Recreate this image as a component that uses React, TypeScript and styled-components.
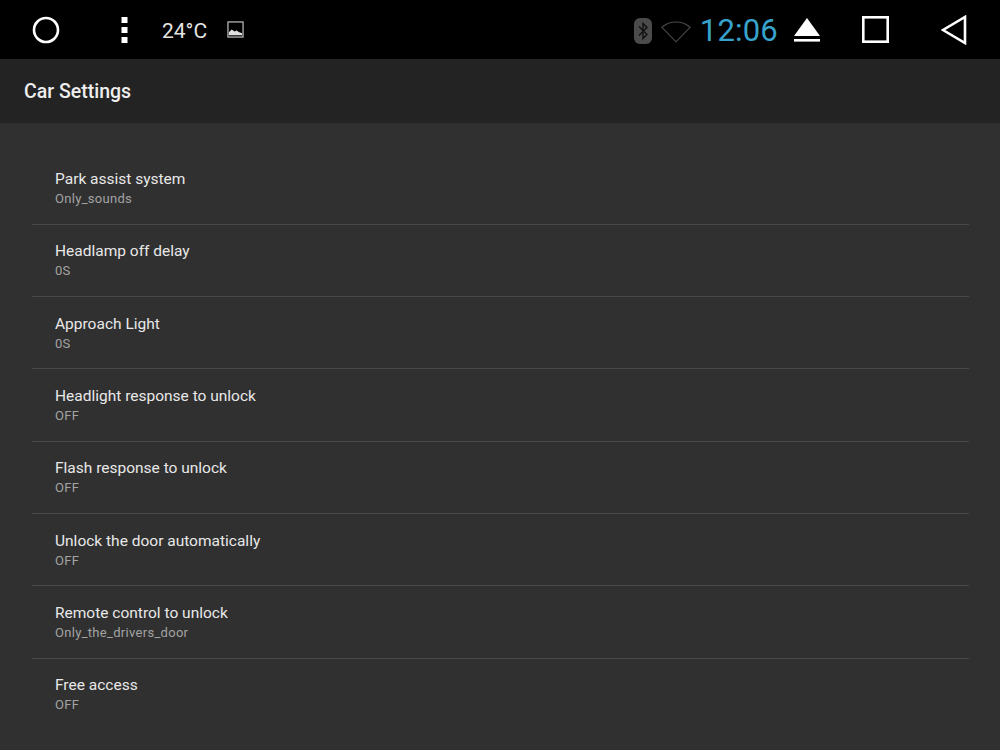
import React from "react";
import styled, { createGlobalStyle } from "styled-components";

const GlobalStyle = createGlobalStyle`
  html, body {
    margin: 0;
    padding: 0;
    background: #303030;
    font-family: Roboto, "Liberation Sans", sans-serif;
  }
`;

const Page = styled.div`
  width: 1000px;
  height: 750px;
  overflow: hidden;
  display: flex;
  flex-direction: column;
  background: #303030;
`;

const StatusBar = styled.div`
  height: 59px;
  flex: none;
  background: #000;
  display: flex;
  align-items: center;
  justify-content: space-between;
`;

const StatusLeft = styled.div`
  display: flex;
  align-items: center;
  padding-left: 32px;
`;

const StatusRight = styled.div`
  display: flex;
  align-items: center;
  padding-right: 33px;
`;

const Temperature = styled.span`
  margin-left: 34px;
  padding-top: 2px;
  font-size: 21px;
  color: #e4e4e4;
  line-height: 24px;
`;

const Clock = styled.span`
  margin-left: 9px;
  padding-top: 3px;
  font-size: 31px;
  line-height: 36px;
  color: #37a3cc;
  letter-spacing: 0.2px;
`;

const Icon = styled.svg<{ $left?: number; $top?: number }>`
  display: block;
  flex: none;
  margin-left: ${(p) => p.$left ?? 0}px;
  margin-top: ${(p) => p.$top ?? 0}px;
`;

const TitleBar = styled.div`
  height: 64px;
  flex: none;
  background: #232323;
  display: flex;
  align-items: center;
  padding-left: 24px;
  font-size: 19.5px;
  font-weight: 500;
  color: #eee;
`;

const List = styled.div`
  padding: 29.5px 31px 0 32px;
`;

const Row = styled.div<{ $last?: boolean }>`
  height: 69.3px;
  box-sizing: content-box;
  padding: 2px 0 0 23px;
  border-bottom: ${(p) => (p.$last ? "none" : "1px solid #484848")};
  display: flex;
  flex-direction: column;
  justify-content: center;
`;

const RowTitle = styled.div`
  font-size: 15.5px;
  line-height: 20px;
  color: #e8e8e8;
`;

const RowValue = styled.div`
  font-size: 13px;
  line-height: 20px;
  color: #a3a3a3;
  letter-spacing: 0.3px;
`;

const settings = [
  { title: "Park assist system", value: "Only_sounds" },
  { title: "Headlamp off delay", value: "0S" },
  { title: "Approach Light", value: "0S" },
  { title: "Headlight response to unlock", value: "OFF" },
  { title: "Flash response to unlock", value: "OFF" },
  { title: "Unlock the door automatically", value: "OFF" },
  { title: "Remote control to unlock", value: "Only_the_drivers_door" },
  { title: "Free access", value: "OFF" },
];

export default function App() {
  return (
    <Page>
      <GlobalStyle />
      <StatusBar>
        <StatusLeft>
          <Icon width="28" height="28" viewBox="0 0 28 28">
            <circle cx="14" cy="14" r="12" fill="none" stroke="#fff" strokeWidth="2.6" />
          </Icon>
          <Icon $left={61} width="7" height="28" viewBox="0 0 7 28" fill="#fff">
            <rect x="0.5" y="1" width="6" height="6" />
            <rect x="0.5" y="11" width="6" height="6" />
            <rect x="0.5" y="21" width="6" height="6" />
          </Icon>
          <Temperature>24°C</Temperature>
          <Icon $left={20} width="17" height="17" viewBox="0 0 18 18">
            <rect x="1" y="1" width="16" height="16" fill="none" stroke="#bdbdbd" strokeWidth="1.3" />
            <path d="M2 15v-3l3-3 3 2 2-1 3 2 3 1v2z" fill="#e0e0e0" />
          </Icon>
        </StatusLeft>
        <StatusRight>
          <Icon $top={3} width="18" height="26" viewBox="0 0 18 26">
            <rect x="0" y="0" width="18" height="26" rx="6" fill="#4b4b4b" />
            <path d="M5 8.5l8 8-4 4V5.5l4 4-8 8" fill="none" stroke="#111" strokeWidth="1.4" />
          </Icon>
          <Icon $left={9} $top={3} width="30" height="23" viewBox="0 0 32 24">
            <path d="M1 7.5C9.5 0 22.5 0 31 7.5L16 23z" fill="none" stroke="#4a4a4a" strokeWidth="1.2" />
          </Icon>
          <Clock>12:06</Clock>
          <Icon $left={16} width="26" height="25" viewBox="0 0 26 25" fill="#fff">
            <path d="M13 1L26 19H0z" />
            <rect x="0" y="22" width="26" height="2.6" />
          </Icon>
          <Icon $left={42} width="27" height="27" viewBox="0 0 27 27">
            <rect x="1.3" y="1.3" width="24.4" height="24.4" fill="none" stroke="#fff" strokeWidth="2.6" />
          </Icon>
          <Icon $left={52} width="26" height="30" viewBox="0 0 26 30">
            <path d="M24 2v26L2 15z" fill="none" stroke="#fff" strokeWidth="2.6" strokeLinejoin="miter" />
          </Icon>
        </StatusRight>
      </StatusBar>
      <TitleBar>Car Settings</TitleBar>
      <List>
        {settings.map((s, i) => (
          <Row key={s.title} $last={i === settings.length - 1}>
            <RowTitle>{s.title}</RowTitle>
            <RowValue>{s.value}</RowValue>
          </Row>
        ))}
      </List>
    </Page>
  );
}
